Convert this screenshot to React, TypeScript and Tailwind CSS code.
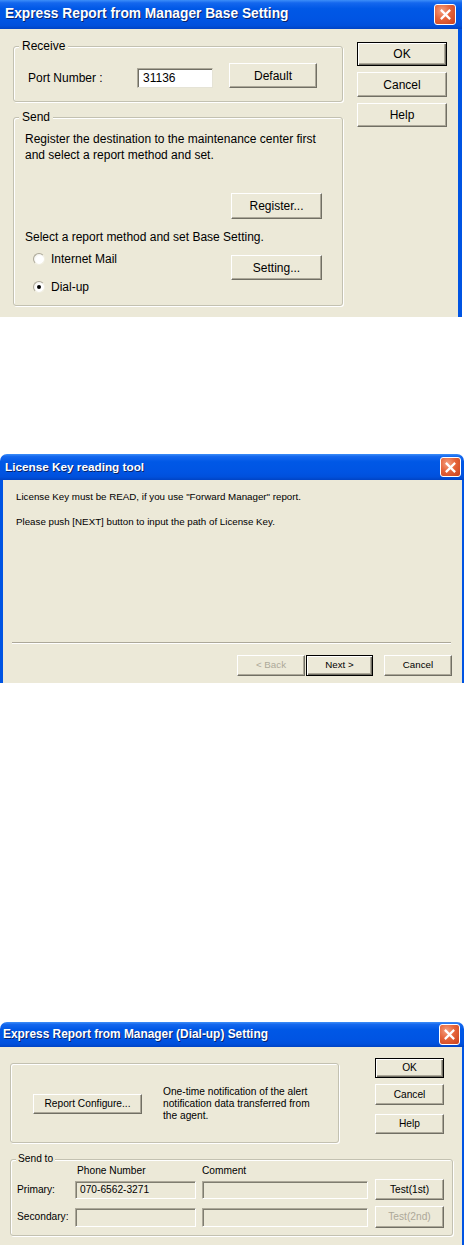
import type { ReactNode } from 'react';

const BEIGE = 'bg-[#ece9d8]';

function CloseBtn({ size }: { size: string }) {
  return (
    <div
      className={`${size} rounded-[3px] border border-white flex items-center justify-center bg-[radial-gradient(circle_at_35%_30%,#f5a080_0%,#e5643a_45%,#c9401c_100%)]`}
    >
      <svg viewBox="0 0 10 10" className="w-[11px] h-[11px]">
        <path d="M1.5 1.5 L8.5 8.5 M8.5 1.5 L1.5 8.5" stroke="white" strokeWidth="2" strokeLinecap="square" />
      </svg>
    </div>
  );
}

function TitleBar({ title, cls, textCls, closeSize }: { title: string; cls: string; textCls: string; closeSize: string }) {
  return (
    <div
      className={`${cls} flex items-center justify-between bg-[linear-gradient(to_bottom,#3d8ef8_0%,#1467ee_10%,#0058e6_30%,#0054e3_70%,#0050dc_88%,#0043c4_100%)]`}
    >
      <span className={`${textCls} font-bold text-white [text-shadow:1px_1px_0_#0a246a]`}>{title}</span>
      <CloseBtn size={closeSize} />
    </div>
  );
}

function Btn({ children, cls, isDefault, disabled }: { children: ReactNode; cls: string; isDefault?: boolean; disabled?: boolean }) {
  const bevel = isDefault
    ? 'border border-black shadow-[inset_1px_1px_0_#fff,inset_-1px_-1px_0_#716f64,inset_-2px_-2px_0_#aca899]'
    : 'border border-t-white border-l-white border-r-[#716f64] border-b-[#716f64] shadow-[inset_-1px_-1px_0_#aca899]';
  return (
    <div
      className={`${cls} ${bevel} ${BEIGE} font-normal flex items-center justify-center ${disabled ? 'text-[#aca899]' : 'text-black'}`}
    >
      {children}
    </div>
  );
}

function Radio({ checked, label }: { checked?: boolean; label: string }) {
  return (
    <div className="h-[20px] flex items-center pl-[8px]">
      <div className="w-[12px] h-[12px] rounded-full bg-[radial-gradient(circle_at_60%_60%,#ffffff_0%,#ffffff_45%,#e4e2d6_100%)] border border-t-[#aca899] border-l-[#aca899] border-r-[#f1efe2] border-b-[#f1efe2] flex items-center justify-center">
        {checked && <div className="w-[4px] h-[4px] rounded-full bg-black" />}
      </div>
      <span className="ml-[6px]">{label}</span>
    </div>
  );
}

function SunkenField({ cls, children }: { cls: string; children?: ReactNode }) {
  return (
    <div
      className={`${cls} border border-t-[#aca899] border-l-[#aca899] border-r-white border-b-white shadow-[inset_1px_1px_0_#7f7d70] flex items-center`}
    >
      {children}
    </div>
  );
}

const groupCls = 'border border-[#c3c1b1] rounded-[3px] shadow-[inset_1px_1px_0_#fff,1px_1px_0_#fff]';

export default function App() {
  return (
    <div className="w-[464px] min-h-[1245px] bg-white font-['Liberation_Sans',Arial,sans-serif] text-black flex flex-col">
      {/* Dialog 1 */}
      <div className="w-[462px] h-[317px] flex flex-col">
        <TitleBar
          title="Express Report from Manager Base Setting"
          cls="h-[29px] pl-[5px] pr-[6px]"
          textCls="text-[13.75px]"
          closeSize="w-[22px] h-[21px]"
        />
        <div className={`flex-1 flex ${BEIGE} border-r-4 border-[#0054e3] text-[12px]`}>
          <div className="ml-[13px] mt-[10px] w-[330px] flex flex-col">
            <fieldset className={`h-[63px] ${groupCls}`}>
              <legend className={`ml-[5px] px-[3px] leading-[14px] ${BEIGE}`}>Receive</legend>
              <div className="flex items-end pl-[14px] pt-[10px]">
                <span className="w-[109px] mb-[3px] leading-[14px]">Port Number :</span>
                <div className="w-[76px] h-[20px] bg-white border border-t-[#aca899] border-l-[#aca899] border-r-[#e5e3d6] border-b-[#e5e3d6] shadow-[inset_1px_1px_0_#716f64] pl-[5px] flex items-center">
                  31136
                </div>
                <Btn cls="ml-[16px] w-[88px] h-[25px]">Default</Btn>
              </div>
            </fieldset>
            <fieldset className={`mt-[8px] h-[196px] ${groupCls}`}>
              <legend className={`ml-[5px] px-[3px] leading-[14px] ${BEIGE}`}>Send</legend>
              <div className="flex flex-col pl-[11px] pt-[7px]">
                <p className="leading-[16px]">
                  Register the destination to the maintenance center first
                  <br />
                  and select a report method and set.
                </p>
                <Btn cls="mt-[30px] self-end mr-[20px] w-[91px] h-[26px]">Register...</Btn>
                <p className="mt-[10px] leading-[16px]">Select a report method and set Base Setting.</p>
                <div className="mt-[4px] flex justify-between">
                  <div className="flex flex-col gap-[8px]">
                    <Radio label="Internet Mail" />
                    <Radio label="Dial-up" checked />
                  </div>
                  <Btn cls="mt-[6px] mr-[20px] w-[91px] h-[25px]">Setting...</Btn>
                </div>
              </div>
            </fieldset>
          </div>
          <div className="ml-[14px] mt-[13px] flex flex-col gap-[6px]">
            <Btn cls="w-[90px] h-[24px]" isDefault>OK</Btn>
            <Btn cls="w-[90px] h-[25px]">Cancel</Btn>
            <Btn cls="w-[90px] h-[24px]">Help</Btn>
          </div>
        </div>
      </div>

      {/* Dialog 2 */}
      <div className="mt-[137px] w-[464px] h-[229px] flex flex-col">
        <TitleBar
          title="License Key reading tool"
          cls="h-[26px] pl-[5px] pr-[3px] rounded-t-[7px]"
          textCls="text-[11.75px]"
          closeSize="w-[21px] h-[20px]"
        />
        <div className={`flex-1 flex flex-col ${BEIGE} border-l-[3px] border-r-[2px] border-[#0054e3] text-[9.75px]`}>
          <p className="pl-[13px] pt-[10px] leading-[14px]">
            License Key must be READ, if you use "Forward Manager" report.
          </p>
          <p className="pl-[13px] mt-[11px] leading-[14px]">
            Please push [NEXT] button to input the path of License Key.
          </p>
          <div className="flex-1" />
          <div className="ml-[9px] w-[439px] border-t border-b border-t-[#aca899] border-b-white" />
          <div className="mt-[11px] pb-[7px] pr-[10px] flex justify-end">
            <Btn cls="w-[68px] h-[21px]" disabled>
              &lt; Back
            </Btn>
            <Btn cls="ml-[1px] w-[67px] h-[21px]" isDefault>
              Next &gt;
            </Btn>
            <Btn cls="ml-[11px] w-[68px] h-[21px]">Cancel</Btn>
          </div>
        </div>
      </div>

      {/* Dialog 3 */}
      <div className="mt-[339px] w-[464px] h-[223px] flex flex-col">
        <TitleBar
          title="Express Report from Manager (Dial-up) Setting"
          cls="h-[25px] pl-[3px] pr-[4px] rounded-t-[7px]"
          textCls="text-[11.9px]"
          closeSize="w-[21px] h-[21px]"
        />
        <div className={`flex-1 flex flex-col ${BEIGE} border-r-[2px] border-[#0054e3] text-[10.2px]`}>
          <div className="flex items-start h-[96px]">
            <div className={`ml-[10px] mt-[16px] w-[329px] h-[80px] flex items-start ${groupCls}`}>
              <Btn cls="ml-[22px] mt-[30px] w-[109px] h-[20px]">Report Configure...</Btn>
              <p className="ml-[21px] mt-[22px] leading-[12px]">
                One-time notification of the alert
                <br />
                notification data transferred from
                <br />
                the agent.
              </p>
            </div>
            <div className="ml-[36px] mt-[11px] flex flex-col">
              <Btn cls="w-[69px] h-[20px]" isDefault>OK</Btn>
              <Btn cls="mt-[6px] w-[69px] h-[21px]">Cancel</Btn>
              <Btn cls="mt-[9px] w-[69px] h-[20px]">Help</Btn>
            </div>
          </div>
          <fieldset className={`ml-[10px] mt-[10px] w-[443px] h-[83px] ${groupCls}`}>
            <legend className={`ml-[5px] px-[2px] leading-[12px] ${BEIGE}`}>Send to</legend>
            <div className="pl-[6px] flex flex-col">
              <div className="h-[11px] leading-[11px] flex">
                <span className="ml-[60px] w-[125px]">Phone Number</span>
                <span>Comment</span>
              </div>
              <div className="mt-[3px] h-[21px] flex items-center">
                <span className="w-[58px]">Primary:</span>
                <SunkenField cls="w-[121px] h-[18px] pl-[4px]">070-6562-3271</SunkenField>
                <SunkenField cls="ml-[6px] w-[166px] h-[18px]" />
                <Btn cls="ml-[7px] w-[69px] h-[21px]">Test(1st)</Btn>
              </div>
              <div className="mt-[6px] h-[22px] flex items-center">
                <span className="w-[58px]">Secondary:</span>
                <SunkenField cls="w-[121px] h-[19px]" />
                <SunkenField cls="ml-[6px] w-[166px] h-[19px]" />
                <Btn cls="ml-[7px] w-[69px] h-[22px]" disabled>
                  Test(2nd)
                </Btn>
              </div>
            </div>
          </fieldset>
        </div>
      </div>
    </div>
  );
}
